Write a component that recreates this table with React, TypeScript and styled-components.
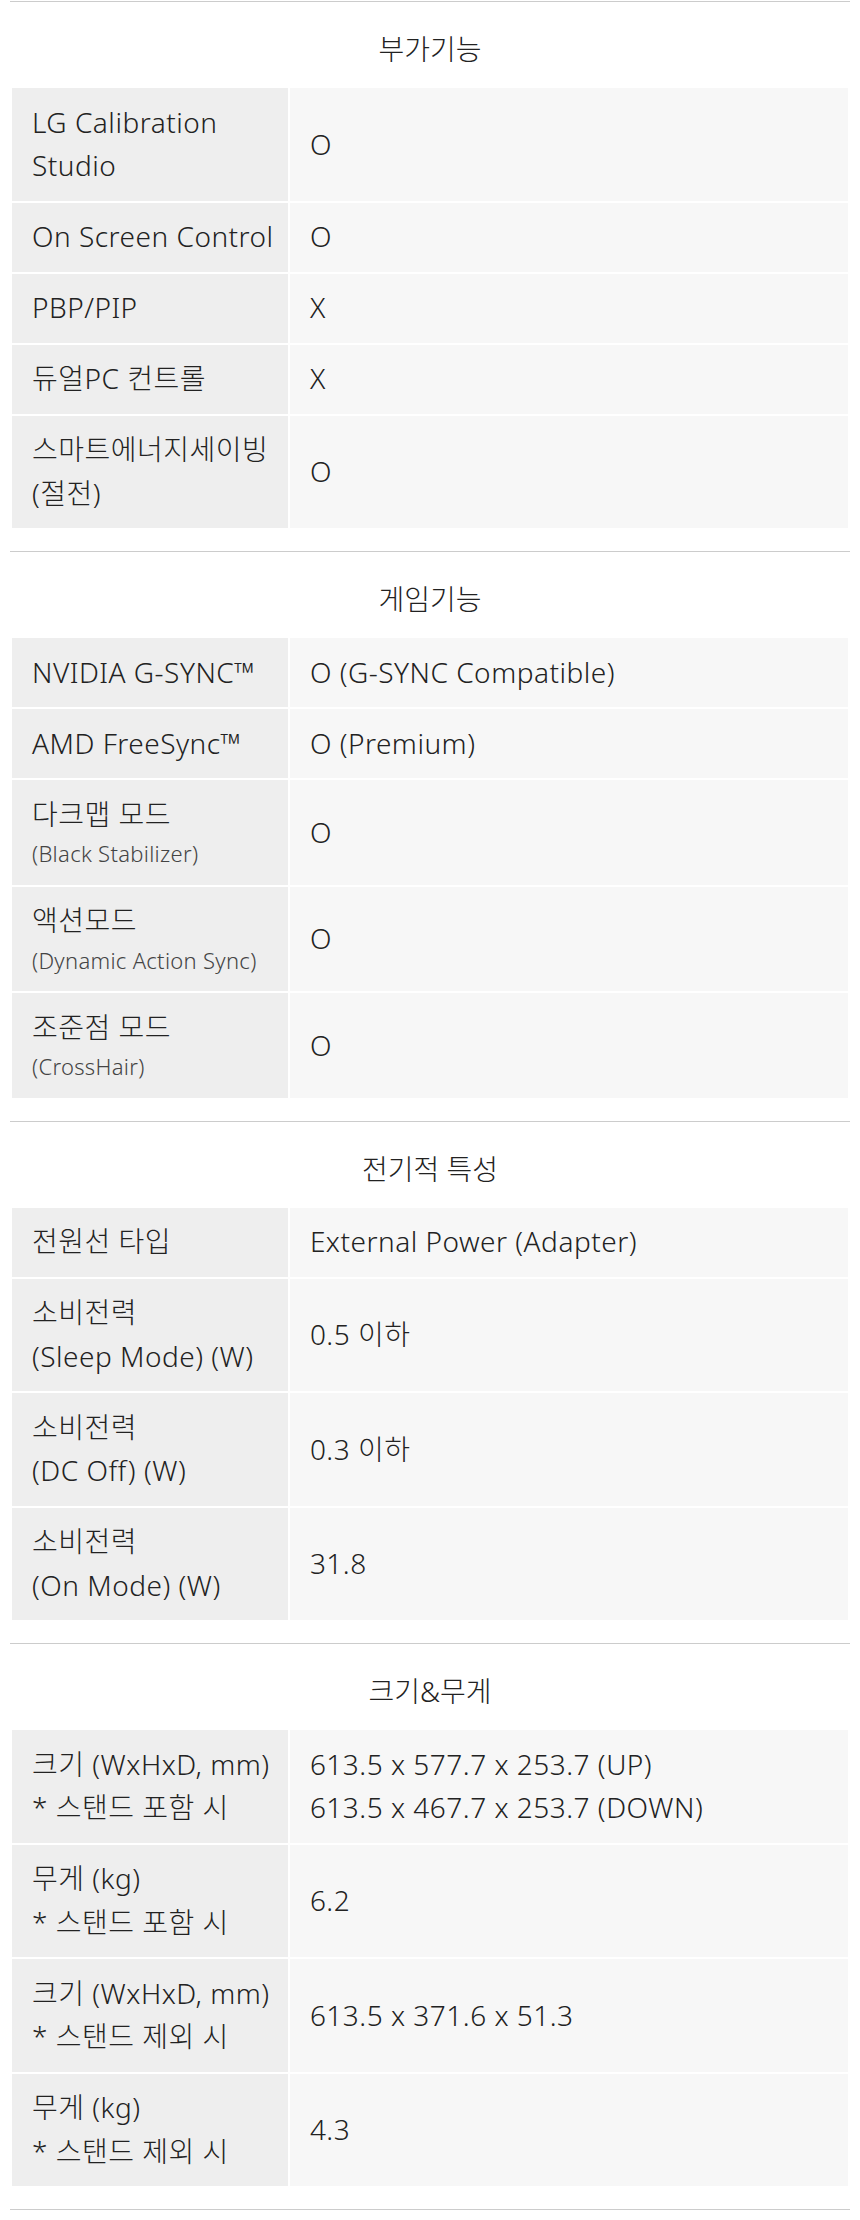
import React from "react";
import styled, { createGlobalStyle } from "styled-components";

const GlobalStyle = createGlobalStyle`
  html, body {
    margin: 0;
    padding: 0;
    background: #ffffff;
  }
  body {
    font-family: "Noto Sans", "Noto Sans CJK KR", sans-serif;
    font-weight: 300;
    color: #222222;
  }
`;

type Row = {
  label: string[];
  sub?: string;
  value: string[];
};

type SectionData = {
  title: string;
  rows: Row[];
};

const DATA: SectionData[] = [
  {
    title: "부가기능",
    rows: [
      { label: ["LG Calibration", "Studio"], value: ["O"] },
      { label: ["On Screen Control"], value: ["O"] },
      { label: ["PBP/PIP"], value: ["X"] },
      { label: ["듀얼PC 컨트롤"], value: ["X"] },
      { label: ["스마트에너지세이빙", "(절전)"], value: ["O"] },
    ],
  },
  {
    title: "게임기능",
    rows: [
      { label: ["NVIDIA G-SYNC™"], value: ["O (G-SYNC Compatible)"] },
      { label: ["AMD FreeSync™"], value: ["O (Premium)"] },
      { label: ["다크맵 모드"], sub: "(Black Stabilizer)", value: ["O"] },
      { label: ["액션모드"], sub: "(Dynamic Action Sync)", value: ["O"] },
      { label: ["조준점 모드"], sub: "(CrossHair)", value: ["O"] },
    ],
  },
  {
    title: "전기적 특성",
    rows: [
      { label: ["전원선 타입"], value: ["External Power (Adapter)"] },
      { label: ["소비전력", "(Sleep Mode) (W)"], value: ["0.5 이하"] },
      { label: ["소비전력", "(DC Off) (W)"], value: ["0.3 이하"] },
      { label: ["소비전력", "(On Mode) (W)"], value: ["31.8"] },
    ],
  },
  {
    title: "크기&무게",
    rows: [
      {
        label: ["크기 (WxHxD, mm)", "* 스탠드 포함 시"],
        value: ["613.5 x 577.7 x 253.7 (UP)", "613.5 x 467.7 x 253.7 (DOWN)"],
      },
      { label: ["무게 (kg)", "* 스탠드 포함 시"], value: ["6.2"] },
      { label: ["크기 (WxHxD, mm)", "* 스탠드 제외 시"], value: ["613.5 x 371.6 x 51.3"] },
      { label: ["무게 (kg)", "* 스탠드 제외 시"], value: ["4.3"] },
    ],
  },
];

const Page = styled.div`
  width: 860px;
  box-sizing: border-box;
  padding: 1px 10px 9px;
`;

const SpecList = styled.div`
  border-bottom: 1px solid #cccccc;
`;

const Section = styled.section`
  border-top: 1px solid #cccccc;
  padding-bottom: 21px;
`;

const SectionTitle = styled.h3`
  margin: 0;
  padding: 27px 0 17px;
  font-size: 28px;
  line-height: 40px;
  font-weight: 300;
  text-align: center;
  color: #222222;
`;

const SpecGrid = styled.div`
  display: grid;
  grid-template-columns: 33% 1fr;
  gap: 2px;
  padding: 2px;
`;

const Cell = styled.div`
  display: flex;
  flex-direction: column;
  justify-content: center;
  font-size: 28px;
  line-height: 43.5px;
  letter-spacing: 0.5px;
  color: #222222;
  min-width: 0;
`;

const LabelCell = styled(Cell)`
  background: #eeeeee;
  padding: 12.75px 0 12.75px 20px;
`;

const ValueCell = styled(Cell)`
  background: #f7f7f7;
  padding: 12.75px 20px;
`;

const Line = styled.span`
  display: block;
  white-space: nowrap;
`;

const SubLine = styled.span`
  display: block;
  white-space: nowrap;
  font-size: 22px;
  line-height: 35.5px;
  letter-spacing: 0.3px;
  color: #444444;
`;

export default function App() {
  return (
    <>
      <GlobalStyle />
      <Page>
        <SpecList>
          {DATA.map((section) => (
            <Section key={section.title}>
              <SectionTitle>{section.title}</SectionTitle>
              <SpecGrid>
                {section.rows.map((row, i) => (
                  <React.Fragment key={i}>
                    <LabelCell>
                      {row.label.map((l, j) => (
                        <Line key={j}>{l}</Line>
                      ))}
                      {row.sub && <SubLine>{row.sub}</SubLine>}
                    </LabelCell>
                    <ValueCell>
                      {row.value.map((v, j) => (
                        <Line key={j}>{v}</Line>
                      ))}
                    </ValueCell>
                  </React.Fragment>
                ))}
              </SpecGrid>
            </Section>
          ))}
        </SpecList>
      </Page>
    </>
  );
}
